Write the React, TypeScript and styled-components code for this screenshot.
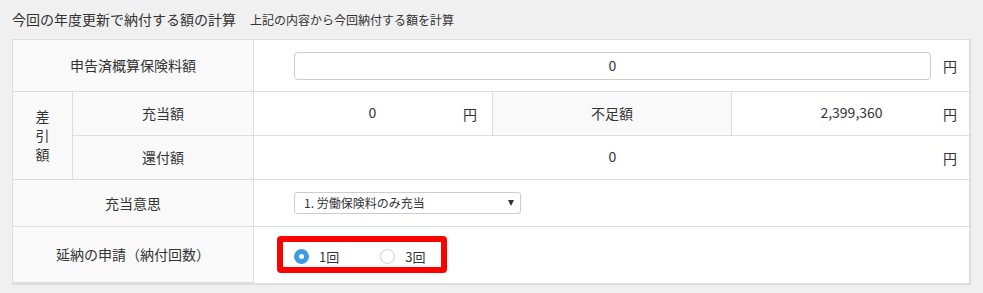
import { useState } from "react";
import styled, { createGlobalStyle } from "styled-components";

const GlobalStyle = createGlobalStyle`
  body {
    margin: 0;
    background: #f0f0f0;
    font-family: "Noto Sans CJK JP", "Noto Sans", sans-serif;
    color: #333;
  }
`;

const Page = styled.div`
  padding: 9px 12px 11px 12px;
`;

const Heading = styled.div`
  display: flex;
  align-items: baseline;
  gap: 14px;
  height: 20px;
  line-height: 20px;
  margin-bottom: 10px;
`;

const Title = styled.span`
  font-size: 14px;
`;

const Sub = styled.span`
  font-size: 12px;
`;

const Table = styled.div`
  display: grid;
  grid-template-columns: 60px 181px 239px 239px 240px;
  grid-template-rows: 52px 44px 44px 47px 56px;
  border: 1px solid #ddd;
  border-right-width: 2px;
  border-bottom-width: 2px;
  background: #fff;
  font-size: 14px;
`;

const Label = styled.div<{ $col: string; $row?: string }>`
  grid-column: ${(p) => p.$col};
  grid-row: ${(p) => p.$row ?? "auto"};
  display: flex;
  align-items: center;
  justify-content: center;
  text-align: center;
  background: #f9f9f9;
  border-right: 1px solid #ddd;
  border-bottom: 1px solid #ddd;
  line-height: 19px;
`;

const Value = styled.div<{ $col: string; $last?: boolean }>`
  grid-column: ${(p) => p.$col};
  display: grid;
  grid-template-columns: 40px 1fr 41px;
  align-items: center;
  border-right: ${(p) => (p.$last ? "none" : "1px solid #ddd")};
  border-bottom: 1px solid #ddd;
`;

const Plain = styled.div<{ $col: string; $noBottom?: boolean }>`
  grid-column: ${(p) => p.$col};
  display: flex;
  align-items: center;
  padding-left: 40px;
  border-bottom: ${(p) => (p.$noBottom ? "none" : "1px solid #ddd")};
`;

const Num = styled.span`
  grid-column: 2;
  text-align: center;
  margin-top: -3px;
`;

const Unit = styled.span`
  grid-column: 3;
  justify-self: end;
  padding-right: 15px;
`;

const AmountInput = styled.input`
  grid-column: 2;
  height: 28px;
  box-sizing: border-box;
  border: 1px solid #ccc;
  border-radius: 4px;
  text-align: center;
  font-family: inherit;
  font-size: 14px;
  color: #333;
  background: #fff;
  padding: 0 0 2px 0;
`;

const SelectWrap = styled.div`
  position: relative;
  width: 227px;
  height: 22px;
`;

const Select = styled.select`
  appearance: none;
  width: 100%;
  height: 100%;
  box-sizing: border-box;
  border: 1px solid #ccc;
  border-radius: 3px;
  background: #fff;
  font-family: inherit;
  font-size: 12px;
  color: #333;
  padding: 0 0 1px 9px;
`;

const Arrow = styled.span`
  position: absolute;
  right: 7px;
  top: 8px;
  width: 0;
  height: 0;
  border-left: 3.5px solid transparent;
  border-right: 3.5px solid transparent;
  border-top: 6px solid #333;
  pointer-events: none;
`;

const RadioGroup = styled.div`
  position: relative;
  display: flex;
  align-items: center;
  gap: 41px;
  height: 19px;
  margin-top: 2px;
`;

const Highlight = styled.span`
  position: absolute;
  left: -17px;
  right: -22px;
  top: -11px;
  bottom: -7px;
  border: 6px solid #ff0000;
  border-radius: 4px;
  pointer-events: none;
`;

const RadioItem = styled.label`
  display: flex;
  align-items: center;
  gap: 10px;
  font-size: 13px;
  cursor: pointer;
`;

const Dot = styled.span<{ $on: boolean }>`
  width: 15px;
  height: 15px;
  box-sizing: border-box;
  border-radius: 50%;
  border: ${(p) => (p.$on ? "5px solid #3d9be0" : "1px solid #ccc")};
  background: #fff;
`;

const App = () => {
  const [times, setTimes] = useState("1");

  return (
    <Page>
      <GlobalStyle />
      <Heading>
        <Title>今回の年度更新で納付する額の計算</Title>
        <Sub>上記の内容から今回納付する額を計算</Sub>
      </Heading>
      <Table>
        <Label $col="1 / 3">申告済概算保険料額</Label>
        <Value $col="3 / 6" $last>
          <AmountInput value="0" readOnly />
          <Unit>円</Unit>
        </Value>

        <Label $col="1" $row="2 / 4">
          差<br />引<br />額
        </Label>
        <Label $col="2">充当額</Label>
        <Value $col="3">
          <Num>0</Num>
          <Unit>円</Unit>
        </Value>
        <Label $col="4">不足額</Label>
        <Value $col="5" $last>
          <Num>2,399,360</Num>
          <Unit>円</Unit>
        </Value>

        <Label $col="2">還付額</Label>
        <Value $col="3 / 6" $last>
          <Num>0</Num>
          <Unit>円</Unit>
        </Value>

        <Label $col="1 / 3">充当意思</Label>
        <Plain $col="3 / 6">
          <SelectWrap>
            <Select defaultValue="1">
              <option value="1">1. 労働保険料のみ充当</option>
              <option value="2">2. 一般拠出金のみ充当</option>
            </Select>
            <Arrow />
          </SelectWrap>
        </Plain>

        <Label $col="1 / 3">延納の申請（納付回数）</Label>
        <Plain $col="3 / 6" $noBottom>
          <RadioGroup>
            <Highlight />
            {["1", "3"].map((n) => (
              <RadioItem key={n} onClick={() => setTimes(n)}>
                <Dot $on={times === n} />
                {n}回
              </RadioItem>
            ))}
          </RadioGroup>
        </Plain>
      </Table>
    </Page>
  );
};

export default App;
